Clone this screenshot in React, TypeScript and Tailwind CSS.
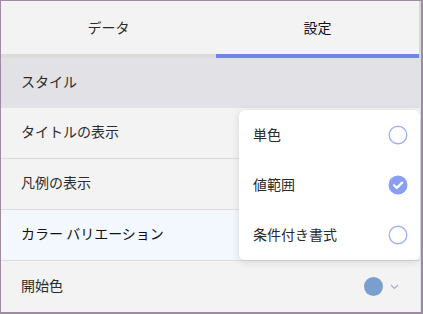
import React from 'react';

const rows = [
  { label: 'タイトルの表示', active: false },
  { label: '凡例の表示', active: false },
  { label: 'カラー バリエーション', active: true },
];

const options = [
  { label: '単色', checked: false },
  { label: '値範囲', checked: true },
  { label: '条件付き書式', checked: false },
];

function Radio({ checked }: { checked: boolean }) {
  if (checked) {
    return (
      <svg width="20" height="20" viewBox="0 0 20 20">
        <circle cx="10" cy="10" r="9.5" fill="#8c9ef2" />
        <path d="M6 10.2l2.8 2.7L14.2 7.6" fill="none" stroke="#fff" strokeWidth="2.2" strokeLinecap="round" strokeLinejoin="round" />
      </svg>
    );
  }
  return (
    <svg width="20" height="20" viewBox="0 0 20 20">
      <circle cx="10" cy="10" r="8.8" fill="#fff" stroke="#a3b1fb" strokeWidth="1.4" />
    </svg>
  );
}

export default function App() {
  return (
    <div
      className="relative h-[314px] w-[423px] overflow-hidden border-t border-l border-r-2 border-b-2 border-[#9d8b9f] bg-[#f3f3f3] text-[14px] text-[#2b2b2b]"
      style={{ fontFamily: '"Noto Sans CJK JP", "Noto Sans", sans-serif' }}
    >
      {/* tabs */}
      <div className="flex h-[57px] border-r-2 border-[#d9d9d9]">
        <div className="flex w-[215px] flex-col">
          <div className="flex flex-1 items-center justify-center">データ</div>
          <div className="h-1 bg-[#dcdcdc]" />
        </div>
        <div className="flex flex-1 flex-col">
          <div className="flex flex-1 items-center justify-center text-[#111]">設定</div>
          <div className="h-1 bg-[#6e84e8]" />
        </div>
      </div>

      <div className="flex h-[50px] items-center bg-[#e1e1e6] pl-5">
        <span className="-mt-[3px]">スタイル</span>
      </div>

      <div className="border-r border-[#e2e2e6]">
        {rows.map((r) => (
          <div
            key={r.label}
            className={`flex h-[51px] items-center border-b border-[#dcdcdf] pl-5 ${r.active ? 'bg-[#f3f7fe] text-[#111]' : ''}`}
          >
            <span className="-mt-[3px]">{r.label}</span>
          </div>
        ))}
        <div className="flex h-[51px] items-center justify-between pl-5 pr-[21px]">
          <span className="-mt-[3px]">開始色</span>
          <div className="flex items-center gap-[7px]">
            <span className="h-[19px] w-[19px] rounded-full bg-[#7a9fcf]" />
            <svg width="9" height="6" viewBox="0 0 9 6">
              <path d="M1 1l3.5 3.5L8 1" fill="none" stroke="#9bb0d4" strokeWidth="1.2" />
            </svg>
          </div>
        </div>
      </div>

      {/* dropdown */}
      <div className="absolute left-[238px] top-[109px] w-[181px] rounded-md bg-white shadow-[0_2px_8px_rgba(0,0,0,0.12)]">
        {options.map((o) => (
          <div key={o.label} className="flex h-[50px] items-center justify-between pl-[14px] pr-[12px]">
            <span className="-mt-[2px]">{o.label}</span>
            <Radio checked={o.checked} />
          </div>
        ))}
      </div>
    </div>
  );
}
